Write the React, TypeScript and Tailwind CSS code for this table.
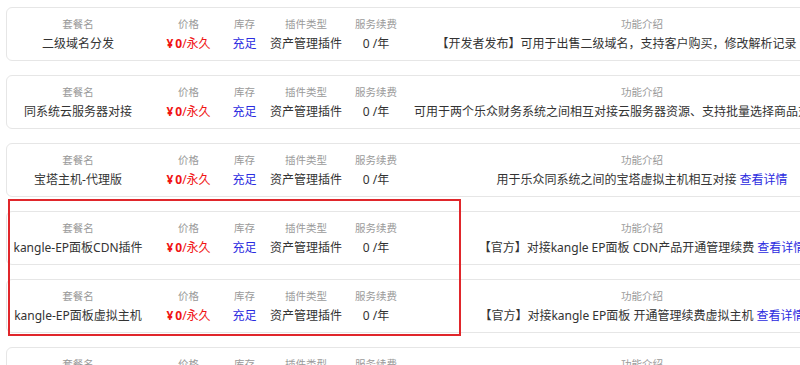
import React from "react";

type Row = {
  name: string;
  desc: string;
  link?: boolean;
};

const rows: Row[] = [
  { name: "二级域名分发", desc: "【开发者发布】可用于出售二级域名，支持客户购买，修改解析记录", link: true },
  { name: "同系统云服务器对接", desc: "可用于两个乐众财务系统之间相互对接云服务器资源、支持批量选择商品对接销售上架", link: false },
  { name: "宝塔主机-代理版", desc: "用于乐众同系统之间的宝塔虚拟主机相互对接", link: true },
  { name: "kangle-EP面板CDN插件", desc: "【官方】对接kangle EP面板 CDN产品开通管理续费", link: true },
  { name: "kangle-EP面板虚拟主机", desc: "【官方】对接kangle EP面板 开通管理续费虚拟主机", link: true },
  { name: "宝塔面板插件", desc: "用于对接宝塔面板开通管理续费", link: true },
];

function Cell({ w, label, children }: { w: string; label: string; children: React.ReactNode }) {
  return (
    <div className={`${w} shrink-0 flex flex-col items-center whitespace-nowrap`}>
      <div className="h-[16px] leading-[16px] text-[10.5px] text-[#9a9a9a]">{label}</div>
      <div className="mt-[2px] h-[20px] leading-[20px] text-[12px] text-[#333333]">{children}</div>
    </div>
  );
}

function Card({ r }: { r: Row }) {
  return (
    <div className="w-[880px] h-[54px] shrink-0 rounded-[6px] border border-[#e6e6e6] bg-white flex pt-[8px]">
      <Cell w="w-[142px]" label="套餐名">{r.name}</Cell>
      <Cell w="w-[79px]" label="价格">
        <span className="text-[#f01414]">
          <span className="font-bold">
            <span className="mr-[2px]">¥</span>0
          </span>
          /永久
        </span>
      </Cell>
      <Cell w="w-[33px]" label="库存">
        <span className="text-[#2b2be0]">充足</span>
      </Cell>
      <Cell w="w-[90px]" label="插件类型">资产管理插件</Cell>
      <Cell w="w-[50px]" label="服务续费">0 /年</Cell>
      <Cell w="w-[482px]" label="功能介绍">
        {r.desc}
        {r.link ? <span className="text-[#2b2be0]"> 查看详情</span> : null}
      </Cell>
    </div>
  );
}

export default function App() {
  return (
    <div
      className="relative w-[800px] h-[365px] overflow-hidden bg-white"
      style={{ fontFamily: '"Noto Sans", "Noto Sans CJK SC", sans-serif' }}
    >
      <div className="flex flex-col gap-[14px] pl-[6px] pt-[7px]">
        {rows.map((r, i) => (
          <Card key={i} r={r} />
        ))}
      </div>
      <div className="absolute left-[8px] top-[199px] w-[453px] h-[137px] border-2 border-[#e0262b] pointer-events-none" />
    </div>
  );
}
